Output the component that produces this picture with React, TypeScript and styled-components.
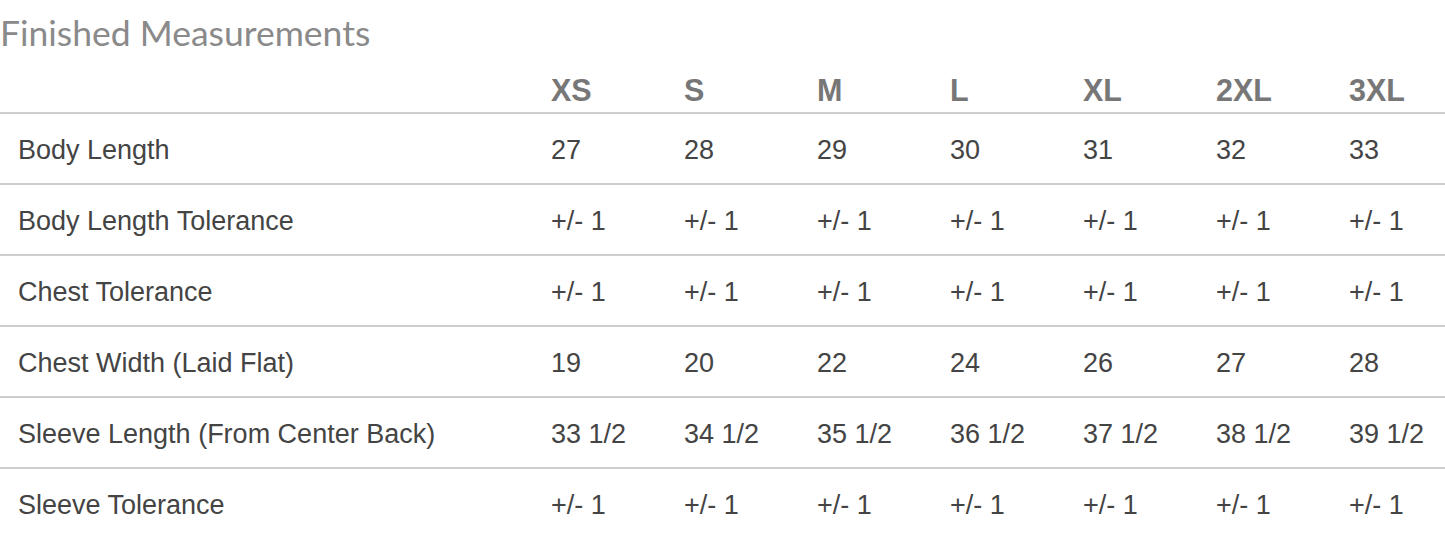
import styled, { createGlobalStyle } from 'styled-components';

const GlobalStyle = createGlobalStyle`
	body {
		margin: 0;
		background: #fff;
	}
`;

const sizes = ['XS', 'S', 'M', 'L', 'XL', '2XL', '3XL'];

const rows: { label: string; values: string[] }[] = [
	{ label: 'Body Length', values: ['27', '28', '29', '30', '31', '32', '33'] },
	{ label: 'Body Length Tolerance', values: Array(7).fill('+/- 1') },
	{ label: 'Chest Tolerance', values: Array(7).fill('+/- 1') },
	{ label: 'Chest Width (Laid Flat)', values: ['19', '20', '22', '24', '26', '27', '28'] },
	{
		label: 'Sleeve Length (From Center Back)',
		values: ['33 1/2', '34 1/2', '35 1/2', '36 1/2', '37 1/2', '38 1/2', '39 1/2'],
	},
	{ label: 'Sleeve Tolerance', values: Array(7).fill('+/- 1') },
];

const Wrapper = styled.section`
	width: 1445px;
	height: 536px;
	overflow: hidden;
	background: #fff;
`;

const Title = styled.h2`
	margin: 0;
	height: 60px;
	padding-top: 13px;
	box-sizing: border-box;
	font-family: Lato, 'Open Sans', sans-serif;
	font-weight: 400;
	font-size: 35.5px;
	line-height: 40px;
	color: #8a8a8a;
`;

const Row = styled.div<{ header?: boolean }>`
	display: grid;
	grid-template-columns: 533px repeat(6, 133px) 1fr;
	align-items: center;
	height: ${({ header }) => (header ? '54px' : '71px')};
	padding-top: ${({ header }) => (header ? '8px' : '4px')};
	border-bottom: 2px solid #cdcdcd;
	box-sizing: border-box;
`;

const Cell = styled.div<{ header?: boolean }>`
	padding-left: 18px;
	font-family: 'Liberation Sans', Arial, sans-serif;
	font-size: ${({ header }) => (header ? '30.5px' : '27px')};
	font-weight: ${({ header }) => (header ? 700 : 400)};
	color: ${({ header }) => (header ? '#777' : '#444')};
	white-space: nowrap;
`;

const App = () => {
	return (
		<Wrapper>
			<GlobalStyle />
			<Title>Finished Measurements</Title>
			<Row header>
				<Cell />
				{sizes.map((s) => (
					<Cell header key={s}>
						{s}
					</Cell>
				))}
			</Row>
			{rows.map((r) => (
				<Row key={r.label}>
					<Cell>{r.label}</Cell>
					{r.values.map((v, i) => (
						<Cell key={i}>{v}</Cell>
					))}
				</Row>
			))}
		</Wrapper>
	);
};

export default App;
